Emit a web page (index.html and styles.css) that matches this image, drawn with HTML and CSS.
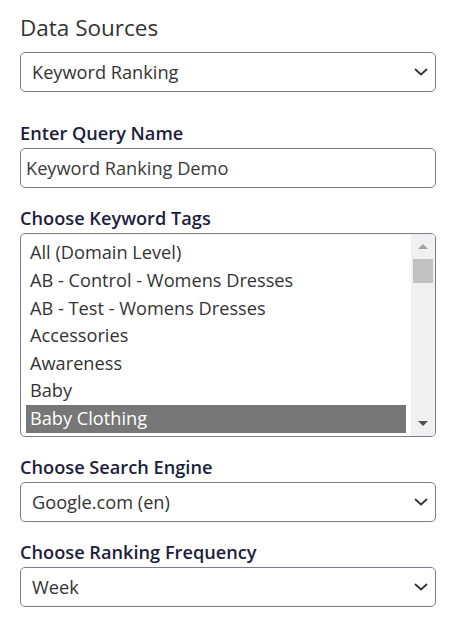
FILE: index.html
```html
<!DOCTYPE html>
<html lang="en">
<head>
<meta charset="utf-8">
<title>Data Sources</title>
<link rel="stylesheet" href="styles.css">
</head>
<body>
<main class="form">
  <h1 class="title">Data Sources</h1>
  <div class="select-wrap">
    <select class="control select">
      <option>Keyword Ranking</option>
    </select>
    <svg class="chevron" width="14" height="8" viewBox="0 0 14 8"><polyline points="1.5,1.5 7,6.5 12.5,1.5" fill="none" stroke="#333" stroke-width="1.8" stroke-linecap="round" stroke-linejoin="round"/></svg>
  </div>

  <div class="field first">
    <label class="label" for="qname">Enter Query Name</label>
    <input id="qname" class="control input" type="text" value="Keyword Ranking Demo">
  </div>

  <div class="field">
    <div class="label">Choose Keyword Tags</div>
    <div class="listbox" role="listbox">
      <div class="options">
        <div class="option">All (Domain Level)</div>
        <div class="option">AB - Control - Womens Dresses</div>
        <div class="option">AB - Test - Womens Dresses</div>
        <div class="option">Accessories</div>
        <div class="option">Awareness</div>
        <div class="option">Baby</div>
        <div class="option selected">Baby Clothing</div>
      </div>
      <div class="scrollbar">
        <div class="sb-btn"><svg width="10" height="5" viewBox="0 0 10 5"><polygon points="0,5 5,0 10,5" fill="#a3a3a3"/></svg></div>
        <div class="sb-thumb"></div>
        <div class="sb-track"></div>
        <div class="sb-btn"><svg width="10" height="5" viewBox="0 0 10 5"><polygon points="0,0 10,0 5,5" fill="#505050"/></svg></div>
      </div>
    </div>
  </div>

  <div class="field">
    <div class="label">Choose Search Engine</div>
    <div class="select-wrap">
      <select class="control select">
        <option>Google.com (en)</option>
      </select>
      <svg class="chevron" width="14" height="8" viewBox="0 0 14 8"><polyline points="1.5,1.5 7,6.5 12.5,1.5" fill="none" stroke="#333" stroke-width="1.8" stroke-linecap="round" stroke-linejoin="round"/></svg>
    </div>
  </div>

  <div class="field">
    <div class="label">Choose Ranking Frequency</div>
    <div class="select-wrap">
      <select class="control select">
        <option>Week</option>
      </select>
      <svg class="chevron" width="14" height="8" viewBox="0 0 14 8"><polyline points="1.5,1.5 7,6.5 12.5,1.5" fill="none" stroke="#333" stroke-width="1.8" stroke-linecap="round" stroke-linejoin="round"/></svg>
    </div>
  </div>
</main>
</body>
</html>
```
FILE: styles.css
```css
* { box-sizing: border-box; }

body {
  margin: 0;
  background: #ffffff;
  font-family: "Open Sans", "Noto Sans", sans-serif;
}

.form {
  width: 456px;
  padding: 0 20px;
  display: flex;
  flex-direction: column;
}

.title {
  margin: 12.5px 0 9.5px;
  font-size: 22.5px;
  line-height: 30px;
  font-weight: 400;
  color: #333333;
}

.field {
  display: flex;
  flex-direction: column;
  margin-top: 18px;
}

.field.first {
  margin-top: 29px;
}

.label {
  display: block;
  font-size: 18.2px;
  line-height: 24px;
  font-weight: 600;
  color: #1d1d3d;
  margin-bottom: 3px;
}

.control {
  width: 416px;
  height: 40px;
  margin: 0;
  border: 1px solid #7c7c8e;
  border-radius: 5px;
  background: #ffffff;
  font-family: inherit;
  font-size: 18.2px;
  color: #333333;
  outline: none;
}

.select-wrap {
  position: relative;
  width: 416px;
}

.select {
  appearance: none;
  -webkit-appearance: none;
  padding: 0 30px 0 11px;
}

.chevron {
  position: absolute;
  right: 8px;
  top: 16px;
  pointer-events: none;
}

.input {
  padding: 0 5px;
  color: #3a3a3a;
}

.listbox {
  display: flex;
  width: 416px;
  height: 204px;
  border: 1px solid #7c7c8e;
  border-radius: 5px;
  overflow: hidden;
  background: #ffffff;
}

.options {
  flex: 1;
  padding: 5.4px 5px 0 5px;
  overflow: hidden;
}

.option {
  height: 27.6px;
  line-height: 27.6px;
  padding-left: 4px;
  font-size: 18.2px;
  color: #333333;
  white-space: nowrap;
}

.option.selected {
  background: #777777;
  color: #ffffff;
}

.scrollbar {
  width: 24px;
  display: flex;
  flex-direction: column;
  background: #f0f0f0;
}

.sb-btn {
  height: 25px;
  display: flex;
  align-items: center;
  justify-content: center;
}

.sb-thumb {
  height: 24px;
  margin: 0 2px;
  background: #c1c1c1;
}

.sb-track {
  flex: 1;
}
```
